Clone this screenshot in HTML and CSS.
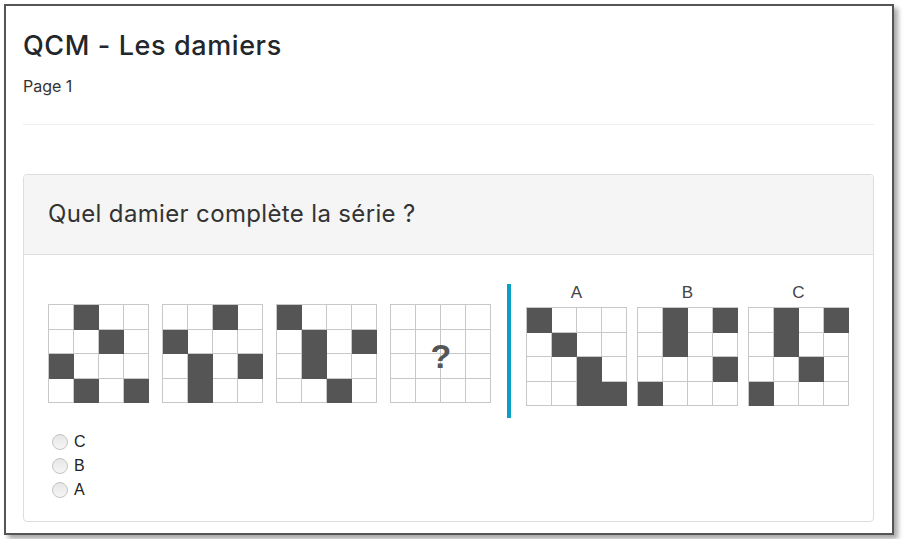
FILE: index.html
```html
<!DOCTYPE html>
<html lang="fr">
<head>
<meta charset="utf-8">
<title>QCM - Les damiers</title>
<link rel="stylesheet" href="styles.css">
</head>
<body>
<div class="frame">
  <h1 class="title">QCM - Les damiers</h1>
  <div class="page">Page 1</div>
  <hr class="sep">
  <section class="card">
    <header class="card-head">Quel damier complète la série ?</header>
    <div class="card-body">
      <div class="puzzle">
        <div class="series">
          <div class="board">
            <i></i><i class="d"></i><i></i><i></i>
            <i></i><i></i><i class="d"></i><i></i>
            <i class="d"></i><i></i><i></i><i></i>
            <i></i><i class="d"></i><i></i><i class="d"></i>
          </div>
          <div class="board">
            <i></i><i></i><i class="d"></i><i></i>
            <i class="d"></i><i></i><i></i><i></i>
            <i></i><i class="d"></i><i></i><i class="d"></i>
            <i></i><i class="d"></i><i></i><i></i>
          </div>
          <div class="board">
            <i class="d"></i><i></i><i></i><i></i>
            <i></i><i class="d"></i><i></i><i class="d"></i>
            <i></i><i class="d"></i><i></i><i></i>
            <i></i><i></i><i class="d"></i><i></i>
          </div>
          <div class="board q">
            <i></i><i></i><i></i><i></i>
            <i></i><i></i><i></i><i></i>
            <i></i><i></i><i></i><i></i>
            <i></i><i></i><i></i><i></i>
            <span class="qmark">?</span>
          </div>
        </div>
        <div class="bar"></div>
        <div class="choices">
          <div class="choice">
            <div class="choice-label">A</div>
            <div class="board">
              <i class="d"></i><i></i><i></i><i></i>
              <i></i><i class="d"></i><i></i><i></i>
              <i></i><i></i><i class="d"></i><i></i>
              <i></i><i></i><i class="d"></i><i class="d"></i>
            </div>
          </div>
          <div class="choice">
            <div class="choice-label">B</div>
            <div class="board">
              <i></i><i class="d"></i><i></i><i class="d"></i>
              <i></i><i class="d"></i><i></i><i></i>
              <i></i><i></i><i></i><i class="d"></i>
              <i class="d"></i><i></i><i></i><i></i>
            </div>
          </div>
          <div class="choice">
            <div class="choice-label">C</div>
            <div class="board">
              <i></i><i class="d"></i><i></i><i class="d"></i>
              <i></i><i class="d"></i><i></i><i></i>
              <i></i><i></i><i class="d"></i><i></i>
              <i class="d"></i><i></i><i></i><i></i>
            </div>
          </div>
        </div>
      </div>
      <ul class="answers">
        <li><span class="radio"></span>C</li>
        <li><span class="radio"></span>B</li>
        <li><span class="radio"></span>A</li>
      </ul>
    </div>
  </section>
</div>
</body>
</html>
```

FILE: styles.css
```css
* { box-sizing: border-box; }
html, body { margin: 0; padding: 0; background: #fff; }
body { font-family: Inter, "Noto Sans", sans-serif; color: #222; }

.frame {
  margin: 4px;
  width: 890px;
  height: 531px;
  border: 2px solid #555;
  box-shadow: 4px 4px 5px rgba(0,0,0,0.35);
  padding: 0 18px 0 17px;
  background: #fff;
}

.title {
  margin: 24px 0 0;
  font-size: 27px;
  line-height: 32px;
  font-weight: 500;
  letter-spacing: 0.6px;
  color: #23272b;
}

.page {
  margin-top: 14px;
  font-size: 16px;
  line-height: 20px;
  color: #333;
}

.sep {
  margin: 28px 0 0;
  border: 0;
  border-top: 1px solid #eee;
  height: 0;
}

.card {
  margin-top: 49px;
  border: 1px solid #ddd;
  border-radius: 4px;
  overflow: hidden;
}

.card-head {
  height: 80px;
  display: flex;
  align-items: center;
  padding: 0 24px 2px;
  background: #f5f5f5;
  border-bottom: 1px solid #ddd;
  font-size: 24px;
  letter-spacing: 0.35px;
  color: #333;
}

.card-body {
  padding: 29px 24px 19px;
}

.puzzle {
  display: flex;
  align-items: flex-start;
}

.series {
  display: flex;
  gap: 13px;
  margin-top: 20px;
}

.board {
  position: relative;
  width: 101px;
  height: 99px;
  display: grid;
  grid-template-columns: repeat(4, 1fr);
  grid-template-rows: repeat(4, 1fr);
  border-top: 1px solid #c8c8c8;
  border-left: 1px solid #c8c8c8;
}

.board i {
  border-right: 1px solid #c8c8c8;
  border-bottom: 1px solid #c8c8c8;
  background: #fff;
}

.board i.d {
  background: #555;
  border-color: #555;
}

.qmark {
  position: absolute;
  left: 0;
  top: 0;
  width: 100%;
  height: 100%;
  display: flex;
  align-items: center;
  justify-content: center;
  font-family: "Liberation Sans", Arial, sans-serif;
  font-weight: 700;
  font-size: 34px;
  color: #555;
  padding-top: 4px;
}

.bar {
  width: 5px;
  height: 134px;
  background: #0aa0c6;
  margin: 0 15px 0 16px;
}

.choices {
  display: flex;
  gap: 10px;
}

.choice-label {
  height: 23px;
  text-align: center;
  font-family: "Liberation Sans", Arial, sans-serif;
  font-size: 17px;
  line-height: 18px;
  color: #444;
}

.answers {
  list-style: none;
  margin: 12px 0 0;
  padding: 0 0 0 4px;
}

.answers li {
  display: flex;
  align-items: center;
  height: 24px;
  font-family: "Liberation Sans", Arial, sans-serif;
  font-size: 16px;
  color: #222;
}

.radio {
  width: 16px;
  height: 16px;
  border-radius: 50%;
  border: 1px solid #c4c4c4;
  background: linear-gradient(#e6e6e6, #f6f6f6);
  margin-right: 6px;
}
```
